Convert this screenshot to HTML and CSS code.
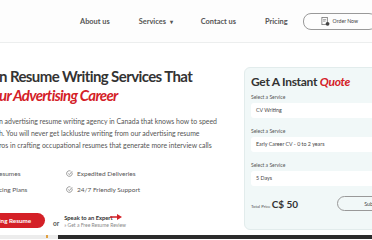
FILE: index.html
```html
<!DOCTYPE html>
<html lang="en">
<head>
    <meta charset="UTF-8">
    <meta name="viewport" content="width=device-width, initial-scale=1.0">
    <title>Advertising Resume Writing Services</title>
    <link rel="stylesheet" href="styles.css">
</head>
<body>
    <!-- Cabecera -->
    <header class="header">
        <nav class="nav">
            <a href="#" class="nav-link">About us</a>
            <a href="#" class="nav-link">Services <span class="caret">&#9662;</span></a>
            <a href="#" class="nav-link">Contact us</a>
            <a href="#" class="nav-link">Pricing</a>
            <a href="#" class="order-btn">
                <svg class="order-icon" viewBox="0 0 10 10" width="9" height="9">
                    <rect x="1" y="0.5" width="6" height="8" fill="none" stroke="#666" stroke-width="0.8"/>
                    <line x1="2.3" y1="3" x2="5.7" y2="3" stroke="#666" stroke-width="0.7"/>
                    <line x1="2.3" y1="4.6" x2="5" y2="4.6" stroke="#666" stroke-width="0.7"/>
                    <circle cx="7.3" cy="7.6" r="2.1" fill="#444"/>
                </svg>
                Order Now
            </a>
        </nav>
    </header>

    <!-- Contenido principal -->
    <main class="hero">
        <div class="hero-text">
            <h1 class="hero-title">
                <span class="line">n Resume Writing Services That</span>
                <span class="line accent">ur Advertising Career</span>
            </h1>
            <p class="hero-desc">
                <span class="line">n advertising resume writing agency in Canada that knows how to speed</span>
                <span class="line">h. You will never get lacklustre writing from our advertising resume</span>
                <span class="line">ros in crafting occupational resumes that generate more interview calls</span>
            </p>

            <ul class="features">
                <li>esumes</li>
                <li><svg class="check" viewBox="0 0 10 10"><path d="M8.6 3.6A4 4 0 1 1 6.5 1.4" fill="none" stroke="#777" stroke-width="1"/><path d="M3.2 5 L4.8 6.6 L8.8 1.8" fill="none" stroke="#777" stroke-width="1"/></svg>Expedited Deliveries</li>
                <li>cing Plans</li>
                <li><svg class="check" viewBox="0 0 10 10"><path d="M8.6 3.6A4 4 0 1 1 6.5 1.4" fill="none" stroke="#777" stroke-width="1"/><path d="M3.2 5 L4.8 6.6 L8.8 1.8" fill="none" stroke="#777" stroke-width="1"/></svg>24/7 Friendly Support</li>
            </ul>

            <div class="cta">
                <a href="#" class="cta-btn">ing Resume</a>
                <span class="cta-or">or</span>
                <div class="expert">
                    <div class="expert-title">Speak to an Expert
                        <svg class="arrow" viewBox="0 0 12 6" width="12" height="6"><path d="M0 2.2h7V0l5 3-5 3V3.8H0z" fill="#d42027"/></svg>
                    </div>
                    <div class="expert-sub">&raquo; Get a Free Resume Review</div>
                </div>
            </div>
        </div>

        <!-- Formulario de cotización -->
        <aside class="quote">
            <h2 class="quote-title">Get A Instant <em>Quote</em></h2>
            <label class="field-label">Select a Service</label>
            <div class="field">CV Writing</div>
            <label class="field-label">Select a Service</label>
            <div class="field">Early Career CV - 0 to 2 years</div>
            <label class="field-label">Select a Service</label>
            <div class="field">5 Days</div>
            <div class="quote-foot">
                <span class="total">Total Price <strong>C$ 50</strong></span>
                <button class="submit-btn">Submit</button>
            </div>
        </aside>
    </main>

    <!-- Franja inferior -->
    <div class="strip">
        <div class="strip-light"><span class="strip-dot"></span></div>
        <div class="strip-dark"></div>
    </div>
</body>
</html>
```

FILE: styles.css
```css
/* Estilos generales */
body {
    font-family: 'Lato', sans-serif;
    margin: 0;
    padding: 0;
    width: 372px;
    height: 240px;
    overflow: hidden;
    background-color: #fff;
    color: #333;
}

a {
    text-decoration: none;
    color: inherit;
}

/* Cabecera */
.header {
    height: 43px;
    background-color: #fdfdfd;
    border-bottom: 1px solid #eceeee;
    box-sizing: border-box;
}

.nav {
    display: flex;
    align-items: center;
    height: 100%;
    padding-left: 80px;
    white-space: nowrap;
}

.nav-link {
    font-size: 7.4px;
    font-weight: 700;
    color: #555;
    margin-right: 29px;
}

.nav-link:nth-child(2) {
    margin-right: 28px;
}

.caret {
    font-size: 6px;
    margin-left: 2px;
}

.order-btn {
    display: flex;
    align-items: center;
    gap: 3px;
    margin-left: -14px;
    height: 15px;
    padding: 0 18px 0 17px;
    border: 1px solid #999;
    border-radius: 8px;
    font-size: 5.2px;
    color: #444;
}

.order-icon {
    display: block;
}

/* Hero */
.hero {
    display: flex;
    padding-top: 24px;
}

.hero-text {
    width: 244px;
    margin-left: -1px;
    flex-shrink: 0;
}

.line {
    display: block;
    white-space: nowrap;
}

.hero-title {
    margin: 0;
    font-size: 15px;
    font-weight: 700;
    letter-spacing: -0.6px;
    line-height: 19px;
    color: #333;
}

.accent {
    color: #d42027;
    font-style: italic;
    letter-spacing: -0.7px;
}

.hero-desc {
    margin: 10px 0 0;
    font-size: 6.9px;
    line-height: 12px;
    color: #555;
}

/* Lista de características */
.features {
    list-style: none;
    margin: 17px 0 0;
    padding: 0;
    display: grid;
    grid-template-columns: 67px auto;
    row-gap: 6px;
    font-size: 6.5px;
    color: #555;
}

.features li {
    display: flex;
    align-items: center;
    height: 10px;
}

.check {
    width: 7px;
    height: 7px;
    margin-right: 4px;
}

/* Llamada a la acción */
.cta {
    display: flex;
    align-items: center;
    margin-top: 19px;
}

.cta-btn {
    display: block;
    margin-left: -20px;
    width: 66px;
    height: 15px;
    line-height: 15px;
    padding-left: 20px;
    box-sizing: border-box;
    background-color: #d42027;
    color: #fff;
    border-radius: 0 8px 8px 0;
    font-size: 6.3px;
    font-weight: 700;
}

.cta-or {
    margin: 5px 0 0 8px;
    font-size: 6.5px;
    font-weight: 700;
    color: #555;
}

.expert {
    margin-left: 5px;
}

.expert-title {
    display: flex;
    align-items: center;
    font-size: 5.8px;
    font-weight: 700;
    color: #333;
}

.arrow {
    margin-left: -3px;
}

.expert-sub {
    font-size: 5px;
    color: #888;
    margin-top: 1px;
}

/* Tarjeta de cotización */
.quote {
    width: 140px;
    flex-shrink: 0;
    margin-left: 1px;
    height: 163px;
    box-sizing: border-box;
    padding: 6px 0 0 6px;
    background-color: #f1f8f8;
    border: 1px solid #e2ecec;
    border-radius: 6px;
}

.quote-title {
    margin: 0 0 5px;
    font-size: 12px;
    letter-spacing: -0.3px;
    font-weight: 700;
    color: #333;
}

.quote-title em {
    color: #d42027;
}

.field-label {
    display: block;
    font-size: 5px;
    color: #555;
    margin-bottom: 3px;
}

.field {
    height: 15px;
    line-height: 15px;
    background-color: #fff;
    border-radius: 3px;
    padding-left: 5px;
    font-size: 5.3px;
    color: #444;
    margin-bottom: 10px;
}

.quote-foot {
    display: flex;
    align-items: center;
    margin-top: 2px;
}

.total {
    white-space: nowrap;
    font-size: 4.3px;
    color: #555;
}

.total strong {
    font-size: 10px;
    font-weight: 700;
    color: #333;
}

.submit-btn {
    margin-left: 39px;
    width: 60px;
    height: 15px;
    border: 1px solid #999;
    border-radius: 8px;
    background: transparent;
    font-family: 'Lato', sans-serif;
    font-size: 5.3px;
    color: #444;
    text-align: left;
    padding-left: 26px;
}

/* Franja inferior */
.strip {
    display: flex;
    height: 4px;
    margin-top: 5px;
}

.strip-light {
    width: 58px;
    background-color: #ececec;
    position: relative;
}

.strip-dot {
    position: absolute;
    left: 46px;
    top: 0;
    width: 2px;
    height: 3px;
    background-color: #e0a040;
}

.strip-dark {
    flex: 1;
    background-color: #2b2b2b;
}
```
